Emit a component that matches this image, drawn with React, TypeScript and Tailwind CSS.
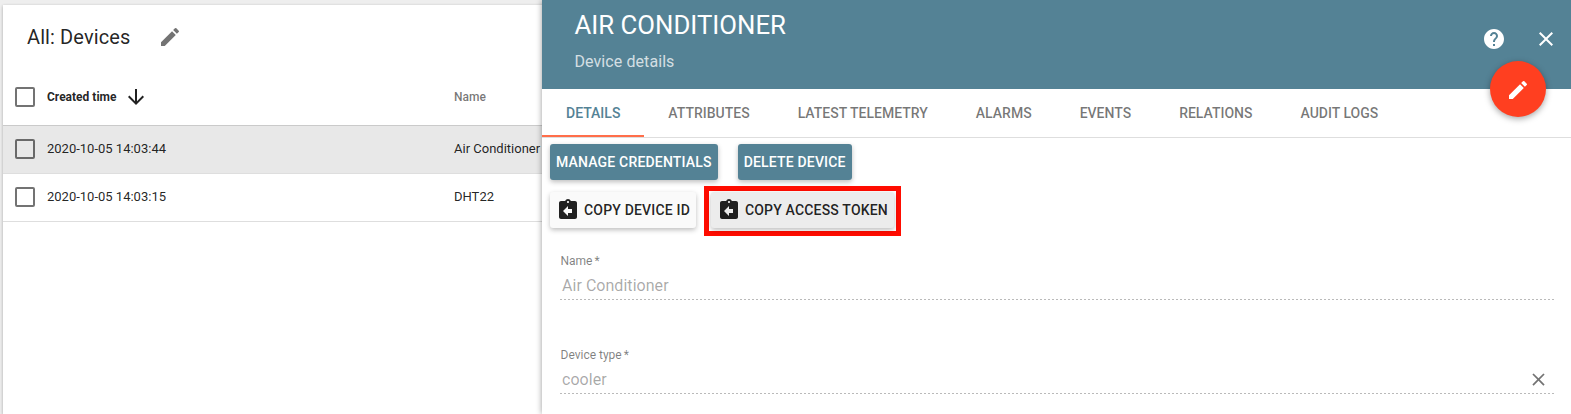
import type { ReactNode } from "react";
import { MdArrowDownward, MdAssignmentReturn, MdClose, MdEdit, MdHelp } from "react-icons/md";

const rows = [
  { time: "2020-10-05 14:03:44", name: "Air Conditioner", selected: true },
  { time: "2020-10-05 14:03:15", name: "DHT22", selected: false },
];

const tabs = ["Details", "Attributes", "Latest telemetry", "Alarms", "Events", "Relations", "Audit logs"];

function Checkbox() {
  return <span className="mr-3 size-5 shrink-0 rounded-[2px] border-2 border-black/55" />;
}

function DeviceTable() {
  return (
    <section className="ml-[3px] mt-[5px] h-[409px] w-[900px] bg-white text-black/87 shadow-[0_1px_3px_rgba(0,0,0,0.3)]">
      <div className="flex h-16 items-center pl-6">
        <h1 className="w-[131px] whitespace-nowrap text-[20px] tracking-[0.1px]">All: Devices</h1>
        <MdEdit className="size-6 text-black/55" />
      </div>
      <div className="flex h-[57px] items-center border-b border-[#cacaca] pl-3 text-[12px]">
        <Checkbox />
        <div className="flex w-[407px] items-center gap-2 font-bold">
          Created time
          <MdArrowDownward className="size-6" />
        </div>
        <div className="font-medium text-black/55">Name</div>
      </div>
      {rows.map((r) => (
        <div
          key={r.time}
          className={`flex h-12 items-center border-b border-[#dedede] pb-px pl-3 text-[13px] ${r.selected ? "bg-[#e8e8e8]" : ""}`}
        >
          <Checkbox />
          <div className="w-[407px]">{r.time}</div>
          <div>{r.name}</div>
        </div>
      ))}
    </section>
  );
}

function Button({ className, children }: { className: string; children: ReactNode }) {
  return (
    <button
      className={`flex h-9 items-center whitespace-nowrap rounded-[3px] text-[14px] font-medium uppercase tracking-[0.18px] shadow-[0_2px_5px_rgba(0,0,0,0.26)] ${className}`}
    >
      {children}
    </button>
  );
}

function Field({ label, value, clearable }: { label: string; value: string; clearable?: boolean }) {
  return (
    <div className="h-[94px]">
      <div className="flex h-[14px] gap-[2px] pl-[0.5px] text-[12px] leading-[14px] text-black/50">
        <span>{label}</span>
        <span>*</span>
      </div>
      <div className="flex h-[31px] items-center justify-between pl-[2px] pr-[5px] pt-[5px] text-[16px] tracking-[0.04px] text-black/35">
        {value}
        {clearable && <MdClose className="mb-[2px] size-[21px] text-black/55" />}
      </div>
      <div className="h-px bg-[linear-gradient(to_right,rgba(0,0,0,0.27)_0,rgba(0,0,0,0.27)_50%,transparent_0)] bg-[length:4px_1px]" />
    </div>
  );
}

export default function App() {
  return (
    <div className="relative h-[414px] w-[1571px] overflow-hidden bg-[#eeeeee] font-[Roboto,sans-serif]">
      <div className="flow-root">
        <DeviceTable />
      </div>
      <aside className="absolute right-0 top-0 h-full w-[1029px] bg-white shadow-[0_0_6px_rgba(0,0,0,0.4)]">
        <header className="relative flex h-[89px] justify-between bg-[#548295] pl-[32.5px] pr-[13px] text-white">
          <div>
            <h2 className="mt-[9px] text-[25.75px] leading-8 uppercase">Air Conditioner</h2>
            <p className="mt-[11px] text-[16px] leading-5 tracking-[0.08px] text-white/75">Device details</p>
          </div>
          <div className="mt-[27px] flex gap-7">
            <MdHelp className="size-6" />
            <MdClose className="size-6" />
          </div>
          <button className="absolute right-[25px] top-[61px] flex size-14 items-center justify-center rounded-full bg-[#ff3f20] shadow-[0_2px_6px_rgba(0,0,0,0.35)]">
            <MdEdit className="mt-px size-6" />
          </button>
        </header>
        <nav className="flex h-[49px] border-b border-[#dedede] text-[14px] font-medium uppercase text-black/54">
          {tabs.map((t, i) => (
            <div
              key={t}
              className={`flex h-12 items-center whitespace-nowrap border-b-2 px-6 pt-[2px] ${i === 0 ? "border-[#ff6e4a] text-[#548295]" : "border-transparent"}`}
            >
              {t}
            </div>
          ))}
        </nav>
        <div className="flex gap-5 pl-2 pt-[6px]">
          <Button className="bg-[#548295] px-[6px] text-white">Manage credentials</Button>
          <Button className="bg-[#548295] px-[6px] text-white">Delete device</Button>
        </div>
        <div className="flex gap-2 pl-2 pt-[6px]">
          <Button className="mt-[6px] gap-1 bg-[#fafafa] px-[6px] text-black/87">
            <MdAssignmentReturn className="size-6" />
            Copy device ID
          </Button>
          <div className="border-[5px] border-[#ff0c00] px-[2px] pb-[3px] pt-px">
            <Button className="gap-1 bg-[#ececec] px-[6px] text-black/87">
              <MdAssignmentReturn className="size-6" />
              Copy access token
            </Button>
          </div>
        </div>
        <div className="ml-[18px] mr-[17px] pt-[18px]">
          <Field label="Name" value="Air Conditioner" />
          <Field label="Device type" value="cooler" clearable />
        </div>
      </aside>
    </div>
  );
}
